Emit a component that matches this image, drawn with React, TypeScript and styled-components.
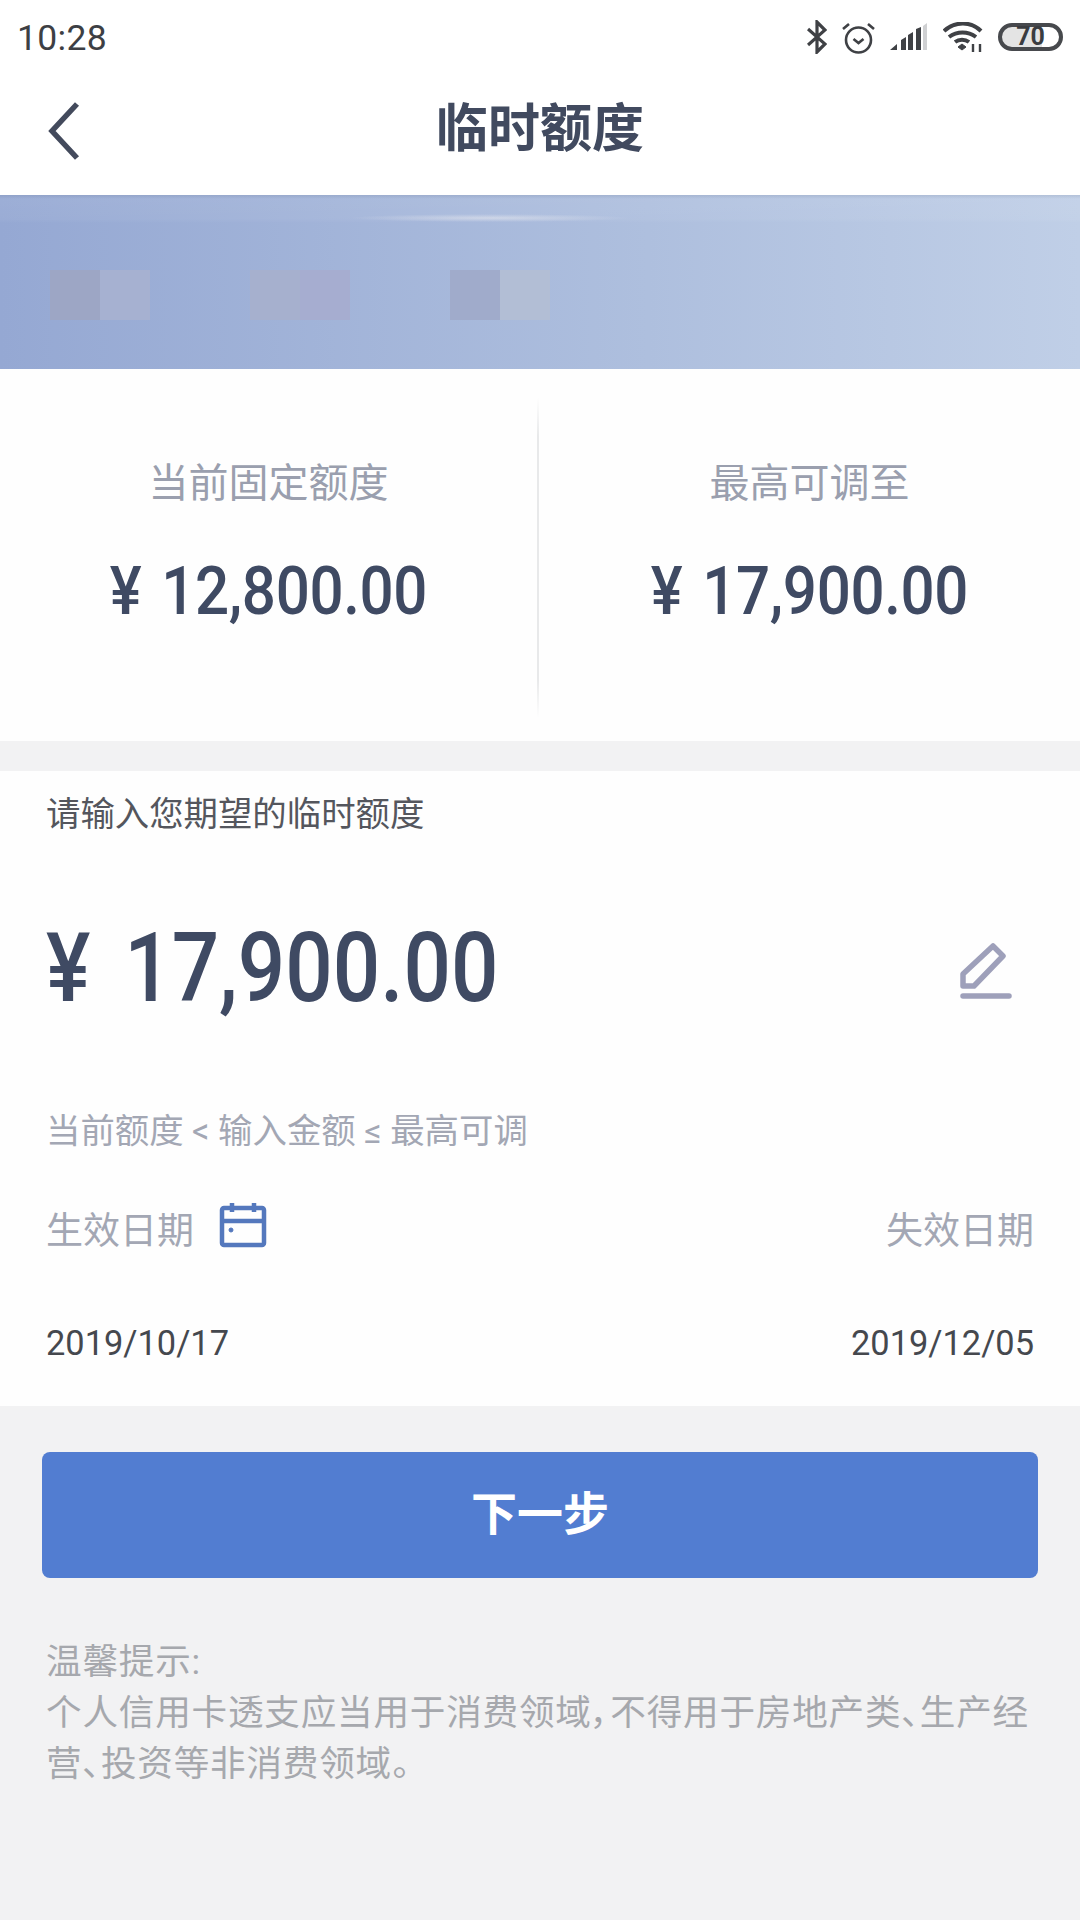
import React from 'react';
import styled, { createGlobalStyle } from 'styled-components';

const Global = createGlobalStyle`
  html, body { margin: 0; padding: 0; background: #f2f2f3; }
  * { box-sizing: border-box; }
  body { font-family: "Roboto", "Noto Sans CJK SC", sans-serif; }
`;
const Page = styled.div`width:1080px;height:1920px;display:flex;flex-direction:column;background:#f2f2f3;overflow:hidden;`;
const StatusBar = styled.div`height:75px;background:#fff;display:flex;align-items:center;justify-content:space-between;padding:0 17px 0 17px;`;
const Time = styled.span`font-size:35.5px;color:#3d3f44;letter-spacing:.3px;`;
const StatusIcons = styled.div`display:flex;align-items:center;gap:15px;color:#3f4145;margin-top:-1px;`;
const Battery = styled.div`position:relative;width:65px;height:28px;border:4px solid #47494d;border-radius:14px;display:flex;align-items:center;justify-content:center;font-size:25px;line-height:20px;font-weight:700;color:#3a3c40;background:linear-gradient(90deg,#e4e4e4 70%,#fff 70%);`;
const Header = styled.header`height:120px;background:#fff;display:flex;align-items:center;justify-content:center;position:relative;`;
const Back = styled.svg`position:absolute;left:48px;top:26px;`;
const Title = styled.h1`margin:-21px 0 0;font-size:52px;font-weight:700;color:#414a5f;`;
const Banner = styled.div`height:174px;background:
  radial-gradient(ellipse 140px 4px at 490px 23px,rgba(235,235,240,.55),transparent),
  linear-gradient(180deg,rgba(120,130,150,.18) 0,rgba(255,255,255,.07) 4px,rgba(255,255,255,.05) 24px,transparent 28px),
  linear-gradient(90deg,#95a8d3 0%,#aebfde 60%,#c0cfe7 100%);
  display:flex;align-items:flex-start;padding:75px 0 0 50px;gap:100px;`;
const Mosaic = styled.div`display:flex;`;
const Tile = styled.div<{$c:string}>`width:50px;height:50px;background:${p=>p.$c};`;
const Stats = styled.section`height:372px;background:#fefefe;display:flex;align-items:stretch;padding-top:29px;`;
const StatCol = styled.div<{$w:string}>`flex:${p=>p.$w};display:flex;flex-direction:column;align-items:center;padding-top:62px;height:320px;`;
const Divider = styled.div`width:2px;height:320px;background:linear-gradient(180deg,#fefefe,#e8e9ea 12%,#e8e9ea 88%,#fefefe);`;
const StatLabel = styled.div`font-size:40px;line-height:48px;color:#9a9fae;`;
const StatValue = styled.div`margin-top:48px;font-size:66px;line-height:72px;font-weight:500;color:#3f4a63;letter-spacing:-.4px;word-spacing:6px;transform:scaleX(.91);white-space:nowrap;`;
const Form = styled.section`margin-top:30px;height:635px;background:#fefefe;padding:0 46px 0 46px;display:flex;flex-direction:column;`;
const Prompt = styled.div`font-size:34.4px;line-height:40px;color:#54565d;margin-top:23px;`;
const AmountRow = styled.div`display:flex;align-items:center;justify-content:space-between;margin-top:84px;height:100px;padding-right:22px;`;
const Amount = styled.div`font-size:96px;line-height:100px;font-weight:500;color:#3f4a63;word-spacing:15px;transform:scaleX(.87);transform-origin:left center;white-space:nowrap;`;
const AmountEdit = styled.svg`flex:none;margin-top:6px;`;
const Hint = styled.div`font-size:34.4px;line-height:40px;color:#a3a7b4;margin-top:93px;`;
const DateRow = styled.div`display:flex;align-items:center;justify-content:space-between;margin-top:49px;height:56px;`;
const DateLabelGroup = styled.div`display:flex;align-items:center;gap:25px;`;
const DateLabel = styled.span`font-size:37px;color:#a3a7b4;`;
const CalendarIcon = styled.svg`flex:none;margin-top:-6px;`;
const DateValues = styled.div`display:flex;justify-content:space-between;margin-top:67px;font-size:34.4px;line-height:40px;color:#45484e;`;
const Button = styled.button`margin:46px 42px 0;height:126px;border:0;border-radius:8px;background:#527dd1;color:#fff;padding-bottom:12px;font:700 46px "Noto Sans CJK SC",sans-serif;`;
const Notes = styled.div`margin:0 46px;padding-top:59px;font-size:35.6px;line-height:51px;color:#a6a8ad;font-feature-settings:"palt";letter-spacing:.8px;`;

export default function App() {
  return (
    <Page>
      <Global />
      <StatusBar>
        <Time>10:28</Time>
        <StatusIcons>
          <svg width="20" height="34" viewBox="0 0 20 34" fill="none" stroke="#3f4145" strokeWidth="3.2"><path d="M1 9l17 15-8 8V2l8 8L1 25" /></svg>
          <svg width="33" height="33" viewBox="0 0 33 33" fill="none" stroke="#3f4145" strokeWidth="2.6"><circle cx="16.5" cy="19" r="12.5" /><path d="M11.5 18l5 4 5-4M1 8l6-5M32 8l-6-5" /></svg>
          <svg width="38" height="28" viewBox="0 0 38 28"><path d="M0 27l7-6v6zM11 27V17l5-3v13zM18 27V12l5-3v18zM26 27V6l5-2v23z" fill="#3f4145" /><path d="M33 3l4-3v27h-4z" fill="#cfd0d2" /></svg>
          <svg width="40" height="30" viewBox="0 0 40 30" fill="none" stroke="#3f4145" strokeWidth="4"><path d="M1 9c11-10 27-10 37 0M6 15c8-6 19-6 27 0M12 20c4-3 10-3 14 0" /><path d="M15 25l4-3 4 3-4 3z" fill="#3f4145" strokeWidth="1" /><path d="M30 22v8M37 22v8" strokeWidth="2.4" /></svg>
          <Battery>70</Battery>
        </StatusIcons>
      </StatusBar>
      <Header>
        <Back width="32" height="60" viewBox="0 0 32 60" fill="none" stroke="#434a5c" strokeWidth="5.5"><path d="M29 3L4 30l25 27" /></Back>
        <Title>临时额度</Title>
      </Header>
      <Banner>
        <Mosaic><Tile $c="#9da6c5" /><Tile $c="#a6b1d1" /></Mosaic>
        <Mosaic><Tile $c="#a6b0ce" /><Tile $c="#a6add0" /></Mosaic>
        <Mosaic><Tile $c="#a0abcb" /><Tile $c="#b2bed5" /></Mosaic>
      </Banner>
      <Stats>
        <StatCol $w="0 0 537px"><StatLabel>当前固定额度</StatLabel><StatValue>¥ 12,800.00</StatValue></StatCol>
        <Divider />
        <StatCol $w="1"><StatLabel>最高可调至</StatLabel><StatValue>¥ 17,900.00</StatValue></StatCol>
      </Stats>
      <Form>
        <Prompt>请输入您期望的临时额度</Prompt>
        <AmountRow>
          <Amount>¥ 17,900.00</Amount>
          <AmountEdit width="52" height="56" viewBox="0 0 52 56" fill="none" stroke="#9ea0ba" strokeWidth="5.5"><path d="M3 43V31L33 3l10 10-29 30z" strokeLinejoin="round" /><path d="M3 53h46" strokeLinecap="round" /></AmountEdit>
        </AmountRow>
        <Hint>当前额度 &lt; 输入金额 ≤ 最高可调</Hint>
        <DateRow>
          <DateLabelGroup>
            <DateLabel>生效日期</DateLabel>
            <CalendarIcon width="48" height="46" viewBox="0 0 48 46" fill="none" stroke="#5478bd" strokeWidth="4.5"><rect x="3" y="6" width="42" height="37" rx="2" /><path d="M3 19h42M13 1v9M35 1v9" /><circle cx="12" cy="28" r="2" fill="#5478bd" strokeWidth="1" /></CalendarIcon>
          </DateLabelGroup>
          <DateLabel>失效日期</DateLabel>
        </DateRow>
        <DateValues><span>2019/10/17</span><span>2019/12/05</span></DateValues>
      </Form>
      <Button>下一步</Button>
      <Notes>温馨提示:<br />个人信用卡透支应当用于消费领域，不得用于房地产类、生产经营、投资等非消费领域。</Notes>
    </Page>
  );
}
